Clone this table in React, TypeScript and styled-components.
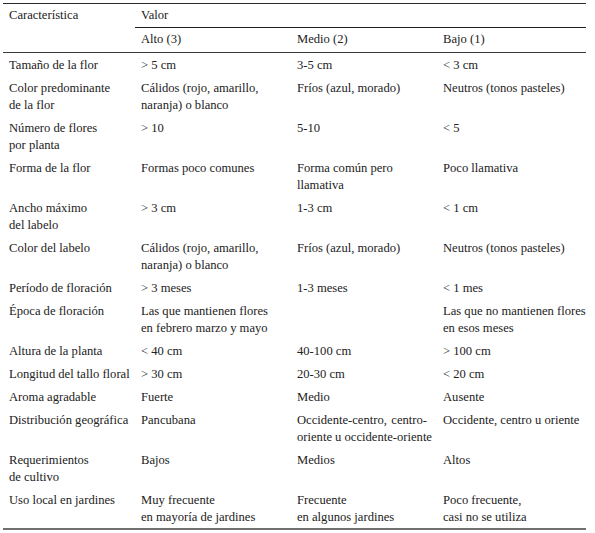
import React from "react";
import styled, { createGlobalStyle } from "styled-components";

const Global = createGlobalStyle`
  html, body { margin: 0; padding: 0; background: #fff; }
  body { font-family: "Liberation Serif", "Times New Roman", serif; color: #222; }
`;

const Table = styled.table`
  margin: 3px 0 0 3px;
  width: 583px;
  border-collapse: collapse;
  table-layout: fixed;
  font-family: "Liberation Serif", "Times New Roman", serif;
  font-size: 12.6px;
  line-height: 17px;
  color: #222;
  border-top: 1.5px solid #2a2a2a;
  border-bottom: 2px solid #707070;
`;

const Col = styled.col<{ $w: number }>`
  width: ${(p) => p.$w}px;
`;

const HeadCell = styled.th<{ $rule?: boolean; $sub?: boolean }>`
  font-weight: normal;
  text-align: left;
  vertical-align: top;
  padding: ${(p) => (p.$sub ? "3px 6px 4px 6px" : "3px 6px 3px 6px")};
  border-bottom: ${(p) => (p.$rule ? "1.5px solid #1e1e1e" : "none")};
`;

const SubHeadRow = styled.tr`
  border-bottom: 1.5px solid #3a3a3a;
`;

const Cell = styled.td`
  vertical-align: top;
  padding: 4px 6px 2px 6px;
  white-space: nowrap;
`;

const Line = styled.span`
  display: block;
`;

const JustLine = styled.span`
  display: block;
  text-align: justify;
  text-align-last: justify;
  width: 130px;
`;

type Row = { c: string[]; v: (string[] | "just")[] };

const rows: Row[] = [
  { c: ["Tamaño de la flor"], v: [["> 5 cm"], ["3-5 cm"], ["< 3 cm"]] },
  {
    c: ["Color predominante", "de la flor"],
    v: [["Cálidos (rojo, amarillo,", "naranja) o blanco"], ["Fríos (azul, morado)"], ["Neutros (tonos pasteles)"]],
  },
  { c: ["Número de flores", "por planta"], v: [["> 10"], ["5-10"], ["< 5"]] },
  {
    c: ["Forma de la flor"],
    v: [["Formas poco comunes"], ["Forma común pero", "llamativa"], ["Poco llamativa"]],
  },
  { c: ["Ancho máximo", "del labelo"], v: [["> 3 cm"], ["1-3 cm"], ["< 1 cm"]] },
  {
    c: ["Color del labelo"],
    v: [["Cálidos (rojo, amarillo,", "naranja) o blanco"], ["Fríos (azul, morado)"], ["Neutros (tonos pasteles)"]],
  },
  { c: ["Período de floración"], v: [["> 3 meses"], ["1-3 meses"], ["< 1 mes"]] },
  {
    c: ["Época de floración"],
    v: [["Las que mantienen flores", "en febrero marzo y mayo"], [], ["Las que no mantienen flores", "en esos meses"]],
  },
  { c: ["Altura de la planta"], v: [["< 40 cm"], ["40-100 cm"], ["> 100 cm"]] },
  { c: ["Longitud del tallo floral"], v: [["> 30 cm"], ["20-30 cm"], ["< 20 cm"]] },
  { c: ["Aroma agradable"], v: [["Fuerte"], ["Medio"], ["Ausente"]] },
  {
    c: ["Distribución geográfica"],
    v: [["Pancubana"], "just", ["Occidente, centro u oriente"]],
  },
  { c: ["Requerimientos", "de cultivo"], v: [["Bajos"], ["Medios"], ["Altos"]] },
  {
    c: ["Uso local en jardines"],
    v: [
      ["Muy frecuente", "en mayoría de jardines"],
      ["Frecuente", "en algunos jardines"],
      ["Poco frecuente,", "casi no se utiliza"],
    ],
  },
];

const Lines = ({ lines }: { lines: string[] }) => (
  <>
    {lines.map((l, i) => (
      <Line key={i}>{l}</Line>
    ))}
  </>
);

export default function App() {
  return (
    <>
      <Global />
      <Table>
        <colgroup>
          <Col $w={132} />
          <Col $w={156} />
          <Col $w={146} />
          <Col $w={149} />
        </colgroup>
        <thead>
          <tr>
            <HeadCell rowSpan={2}>Característica</HeadCell>
            <HeadCell colSpan={3} $rule>
              Valor
            </HeadCell>
          </tr>
          <SubHeadRow>
            <HeadCell $sub>Alto (3)</HeadCell>
            <HeadCell $sub>Medio (2)</HeadCell>
            <HeadCell $sub>Bajo (1)</HeadCell>
          </SubHeadRow>
        </thead>
        <tbody>
          {rows.map((r, i) => (
            <tr key={i}>
              <Cell>
                <Lines lines={r.c} />
              </Cell>
              {r.v.map((v, j) => (
                <Cell key={j}>
                  {v === "just" ? (
                    <>
                      <JustLine>Occidente-centro, centro-</JustLine>
                      <Line>oriente u occidente-oriente</Line>
                    </>
                  ) : (
                    <Lines lines={v} />
                  )}
                </Cell>
              ))}
            </tr>
          ))}
        </tbody>
      </Table>
    </>
  );
}
